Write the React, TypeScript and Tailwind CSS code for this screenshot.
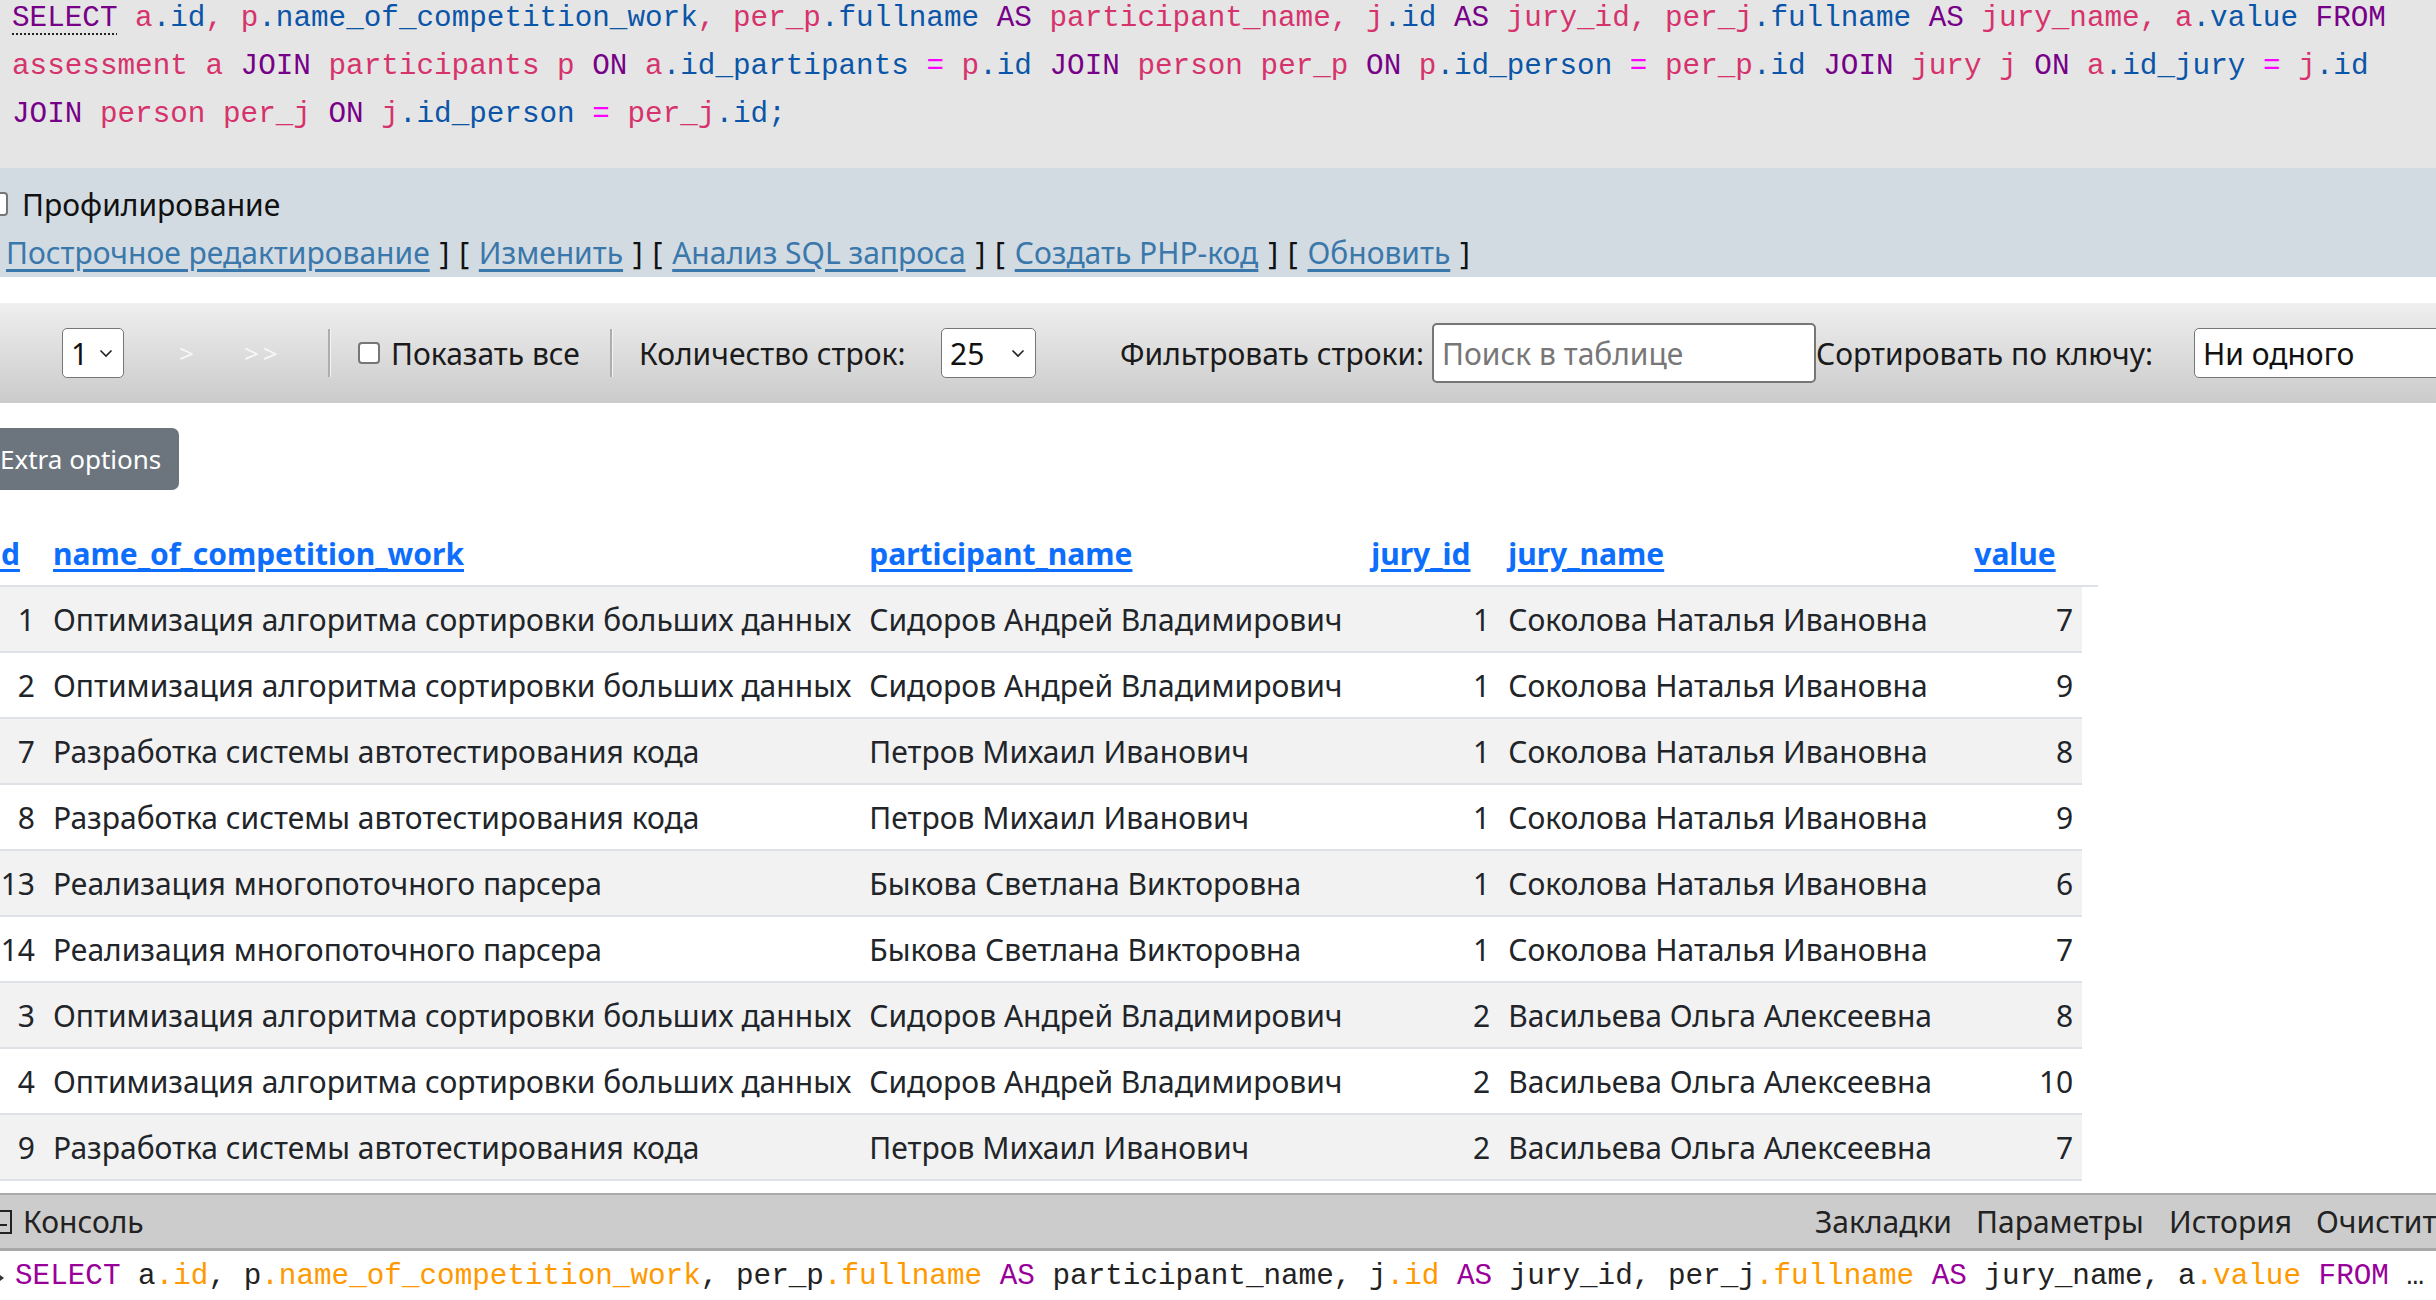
import React from "react";

const KEYWORDS = new Set(["SELECT", "AS", "FROM", "JOIN", "ON"]);

const sqlLines = [
  "SELECT a.id, p.name_of_competition_work, per_p.fullname AS participant_name, j.id AS jury_id, per_j.fullname AS jury_name, a.value FROM",
  "assessment a JOIN participants p ON a.id_partipants = p.id JOIN person per_p ON p.id_person = per_p.id JOIN jury j ON a.id_jury = j.id",
  "JOIN person per_j ON j.id_person = per_j.id;",
];

const consoleSql =
  "SELECT a.id, p.name_of_competition_work, per_p.fullname AS participant_name, j.id AS jury_id, per_j.fullname AS jury_name, a.value FROM";

function tokenize(line: string) {
  return line.match(/(\s+|[A-Za-z_]+(?:\.[A-Za-z_]+)?|.)/g) ?? [];
}

// formatted query at the top of the page
function SqlLine({ text }: { text: string }) {
  const parts = tokenize(text);
  return (
    <div className="h-[48px] leading-[48px] whitespace-pre">
      {parts.map((t, i) => {
        if (KEYWORDS.has(t)) {
          return (
            <span
              key={i}
              className={
                t === "SELECT"
                  ? "text-[#770088] underline decoration-dotted decoration-[#222] decoration-[2px] underline-offset-[7px]"
                  : "text-[#770088]"
              }
            >
              {t}
            </span>
          );
        }
        if (t === "=") return <span key={i} className="text-[#ff00ff]">{t}</span>;
        if (t === ";") return <span key={i} className="text-[#0b55a8]">{t}</span>;
        if (t.includes(".")) {
          const [head, tail] = t.split(".");
          return (
            <span key={i}>
              <span className="text-[#d6336c]">{head}</span>
              <span className="text-[#0b55a8]">.{tail}</span>
            </span>
          );
        }
        return <span key={i} className="text-[#d6336c]">{t}</span>;
      })}
    </div>
  );
}

function ConsoleLine({ text }: { text: string }) {
  const parts = tokenize(text);
  return (
    <span className="whitespace-pre">
      {parts.map((t, i) => {
        if (KEYWORDS.has(t)) return <span key={i} className="text-[#990099]">{t}</span>;
        if (t.includes(".")) {
          const [head, tail] = t.split(".");
          return (
            <span key={i}>
              <span className="text-[#222]">{head}</span>
              <span className="text-[#ff9900]">.{tail}</span>
            </span>
          );
        }
        return <span key={i} className="text-[#222]">{t}</span>;
      })}
    </span>
  );
}

function Chevron() {
  return (
    <svg width="14" height="10" viewBox="0 0 14 10" fill="none">
      <path d="M1.5 2.5 L7 8 L12.5 2.5" stroke="#222" strokeWidth="1.6" />
    </svg>
  );
}

function FakeSelect({ value, className }: { value: string; className: string }) {
  return (
    <div
      className={`flex h-[50px] shrink-0 items-center justify-between rounded-[5px] border border-[#767676] bg-white pl-[8px] pr-[10px] text-[#111] ${className}`}
    >
      <span>{value}</span>
      <Chevron />
    </div>
  );
}

function Separator() {
  return <div className="h-[48px] w-[3px] shrink-0 border-r border-r-[#f4f4f4] bg-[#adadad]" />;
}

function Bracket({ text }: { text: string }) {
  return <span className="[word-spacing:2px]">{text}</span>;
}

const rows = [
  ["1", "Оптимизация алгоритма сортировки больших данных", "Сидоров Андрей Владимирович", "1", "Соколова Наталья Ивановна", "7"],
  ["2", "Оптимизация алгоритма сортировки больших данных", "Сидоров Андрей Владимирович", "1", "Соколова Наталья Ивановна", "9"],
  ["7", "Разработка системы автотестирования кода", "Петров Михаил Иванович", "1", "Соколова Наталья Ивановна", "8"],
  ["8", "Разработка системы автотестирования кода", "Петров Михаил Иванович", "1", "Соколова Наталья Ивановна", "9"],
  ["13", "Реализация многопоточного парсера", "Быкова Светлана Викторовна", "1", "Соколова Наталья Ивановна", "6"],
  ["14", "Реализация многопоточного парсера", "Быкова Светлана Викторовна", "1", "Соколова Наталья Ивановна", "7"],
  ["3", "Оптимизация алгоритма сортировки больших данных", "Сидоров Андрей Владимирович", "2", "Васильева Ольга Алексеевна", "8"],
  ["4", "Оптимизация алгоритма сортировки больших данных", "Сидоров Андрей Владимирович", "2", "Васильева Ольга Алексеевна", "10"],
  ["9", "Разработка системы автотестирования кода", "Петров Михаил Иванович", "2", "Васильева Ольга Алексеевна", "7"],
  ["", "", "", "", "", ""],
];

const headers = ["id", "name_of_competition_work", "participant_name", "jury_id", "jury_name", "value"];
const numeric = [true, false, false, true, false, true];

export default function App() {
  return (
    <div className="flex h-[1300px] w-[2436px] flex-col overflow-hidden bg-white font-['Noto_Sans',sans-serif] text-[30px] text-[#212529]">
      <div className="min-h-0 flex-1 overflow-hidden">
        {/* query box */}
        <div className="h-[168px] overflow-hidden bg-[#e5e5e5] pl-[12px] font-['Liberation_Mono',monospace] text-[29.3px]">
          <div className="-mt-[5px]">
            {sqlLines.map((l, i) => (
              <SqlLine key={i} text={l} />
            ))}
          </div>
        </div>

        {/* profiling + links */}
        <div className="h-[109px] bg-[#d3dbe2] pt-[12px] text-[#111]">
          <div className="flex h-[48px] items-center">
            <div className="-ml-[16px] mr-[14px] h-[24px] w-[24px] rounded-[4px] border-2 border-[#767676] bg-white" />
            <span>Профилирование</span>
          </div>
          <div className="flex h-[48px] items-center whitespace-pre pl-[6px]">
            <a className="text-[#3a78ab] underline underline-offset-[5px]">Построчное редактирование</a>
            <Bracket text=" ] [ " />
            <a className="text-[#3a78ab] underline underline-offset-[5px]">Изменить</a>
            <Bracket text=" ] [ " />
            <a className="text-[#3a78ab] underline underline-offset-[5px]">Анализ SQL запроса</a>
            <Bracket text=" ] [ " />
            <a className="text-[#3a78ab] underline underline-offset-[5px]">Создать PHP-код</a>
            <Bracket text=" ] [ " />
            <a className="text-[#3a78ab] underline underline-offset-[5px]">Обновить</a>
            <Bracket text=" ]" />
          </div>
        </div>

        {/* navigation toolbar */}
        <div className="mt-[26px] flex h-[100px] items-center whitespace-nowrap bg-linear-to-b from-[#efefef] to-[#cbcbcb] text-[#1a1a1a]">
          <FakeSelect value="1" className="ml-[62px] w-[62px]" />
          <span className="ml-[55px] w-[65px] shrink-0 text-[26px] text-[#f7f7f7]">&gt;</span>
          <span className="w-[84px] shrink-0 text-[26px] tracking-[4px] text-[#f7f7f7]">&gt;&gt;</span>
          <Separator />
          <div className="ml-[27px] h-[22px] w-[22px] shrink-0 rounded-[4px] border-2 border-[#767676] bg-white" />
          <span className="ml-[11px] w-[219px] shrink-0">Показать все</span>
          <Separator />
          <span className="ml-[26px] w-[302px] shrink-0">Количество строк:</span>
          <FakeSelect value="25" className="w-[95px]" />
          <span className="ml-[84px] w-[312px] shrink-0">Фильтровать строки:</span>
          <input
            readOnly
            placeholder="Поиск в таблице"
            className="h-[60px] w-[384px] shrink-0 rounded-[5px] border-2 border-[#767676] bg-white px-[8px] text-[30px] placeholder:text-[#777]"
          />
          <span className="w-[378px] shrink-0">Сортировать по ключу:</span>
          <FakeSelect value="Ни одного" className="w-[420px]" />
        </div>

        {/* extra options */}
        <div className="mt-[25px] flex">
          <button className="-ml-[18px] h-[62px] rounded-[7px] bg-[#6c757d] pl-[18px] pr-[18px] text-[26px] text-white">
            Extra options
          </button>
        </div>

        {/* results */}
        <table className="-ml-[17px] mt-[31px] table-fixed border-separate border-spacing-0">
          <colgroup>
            <col className="w-[61px]" />
            <col className="w-[815px]" />
            <col className="w-[502px]" />
            <col className="w-[137px]" />
            <col className="w-[466px]" />
            <col className="w-[117px]" />
            <col className="w-[16px]" />
          </colgroup>
          <thead>
            <tr>
              {headers.map((h) => (
                <th
                  key={h}
                  className="h-[66px] border-b-2 border-[#dee2e6] px-[9px] text-left align-middle font-bold whitespace-nowrap"
                >
                  <a className="text-[#0d6efd] underline underline-offset-[4px]">{h}</a>
                </th>
              ))}
              <th className="border-b-2 border-[#dee2e6]" />
            </tr>
          </thead>
          <tbody>
            {rows.map((r, i) => (
              <tr key={i}>
                {r.map((c, j) => (
                  <td
                    key={j}
                    className={`h-[66px] border-b-2 border-[#dee2e6] px-[9px] align-middle whitespace-nowrap ${
                      i % 2 === 0 ? "bg-[#f2f2f2]" : "bg-white"
                    } ${numeric[j] ? "text-right" : "text-left"}`}
                  >
                    {c}
                  </td>
                ))}
                <td />
              </tr>
            ))}
          </tbody>
        </table>
      </div>

      {/* console */}
      <div className="shrink-0">
        <div className="flex h-[58px] items-center whitespace-nowrap border-t-2 border-b-[3px] border-t-[#aaaaaa] border-b-[#a9a9a9] bg-[#cccccc] text-[#222]">
          <div className="flex w-[1815px] shrink-0 items-center">
            <svg width="24" height="24" viewBox="0 0 24 24" className="-ml-[12px]" fill="none">
              <rect x="1" y="1" width="22" height="22" stroke="#222" strokeWidth="2" />
              <path d="M5 15 H19" stroke="#222" strokeWidth="2" />
            </svg>
            <span className="ml-[11px]">Консоль</span>
          </div>
          <span className="w-[161px] shrink-0">Закладки</span>
          <span className="w-[193px] shrink-0">Параметры</span>
          <span className="w-[147px] shrink-0">История</span>
          <span className="shrink-0">Очистить</span>
        </div>
        <div className="flex h-[49px] items-start overflow-hidden bg-white pt-[2px] font-['Liberation_Mono',monospace] text-[29.3px] leading-[48px]">
          <svg width="12" height="16" viewBox="0 0 12 16" className="-ml-[6px] mr-[9px] mt-[17px] shrink-0">
            <path d="M2 2 L10 8 L2 14 Z" fill="#333" />
          </svg>
          <ConsoleLine text={consoleSql} />
          <span className="whitespace-pre text-[#222]"> …</span>
        </div>
      </div>
    </div>
  );
}
